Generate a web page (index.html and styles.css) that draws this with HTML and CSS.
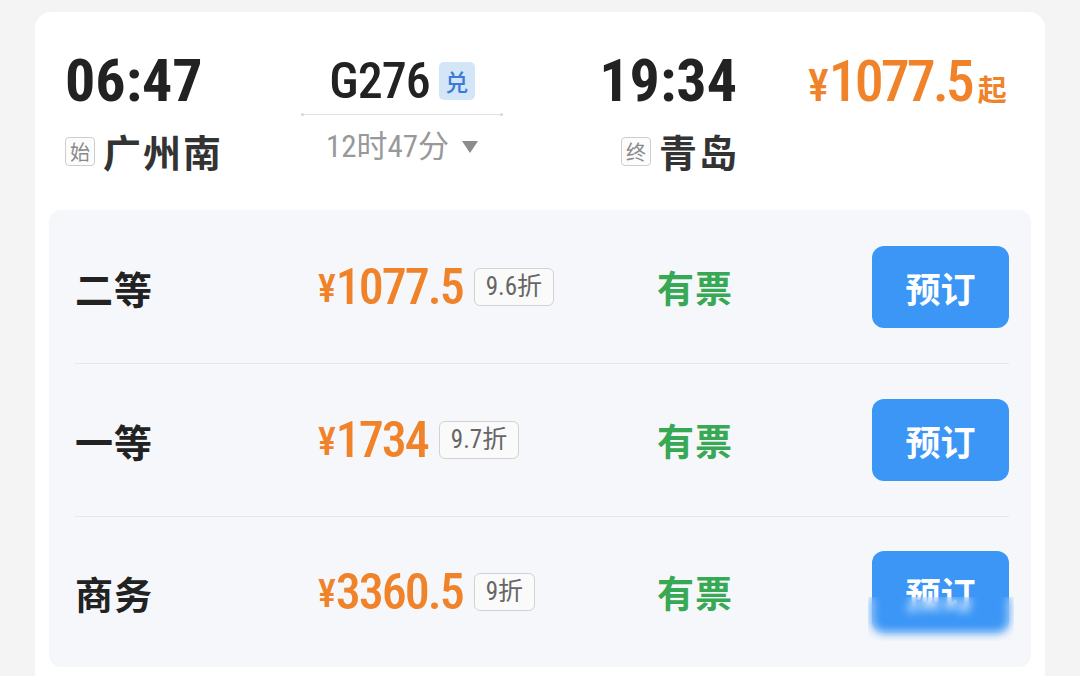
FILE: index.html
```html
<!DOCTYPE html>
<html lang="zh-CN">
<head>
<meta charset="utf-8">
<title>G276</title>
<link rel="stylesheet" href="styles.css">
</head>
<body>
<div class="card">
  <div class="head">
    <div class="dep">
      <div class="time">06:47</div>
      <div class="station"><span class="mark">始</span><span class="name">广州南</span></div>
    </div>
    <div class="train">
      <div class="train-no"><span class="no">G276</span><span class="dui">兑</span></div>
      <div class="track"></div>
      <div class="duration"><span>12时47分</span><svg class="tri" width="16" height="12" viewBox="0 0 16 12"><path d="M0 0H16L8 12Z" fill="#8c8c8c"/></svg></div>
    </div>
    <div class="arr">
      <div class="time">19:34</div>
      <div class="station"><span class="mark">终</span><span class="name">青岛</span></div>
    </div>
    <div class="from-price"><span class="yen">¥</span><span class="amt">1077.5</span><span class="qi">起</span></div>
  </div>
  <div class="seats">
    <div class="seat">
      <div class="seat-name">二等</div>
      <div class="seat-price"><span class="yen">¥</span><span class="amt">1077.5</span><span class="disc">9.6折</span></div>
      <div class="avail">有票</div>
      <button class="book">预订</button>
    </div>
    <div class="seat">
      <div class="seat-name">一等</div>
      <div class="seat-price"><span class="yen">¥</span><span class="amt">1734</span><span class="disc">9.7折</span></div>
      <div class="avail">有票</div>
      <button class="book">预订</button>
    </div>
    <div class="seat">
      <div class="seat-name">商务</div>
      <div class="seat-price"><span class="yen">¥</span><span class="amt">3360.5</span><span class="disc">9折</span></div>
      <div class="avail">有票</div>
      <button class="book">预订</button>
      <div class="smudge"></div>
    </div>
  </div>
</div>
</body>
</html>
```

FILE: styles.css
```css
* { box-sizing: border-box; }
html, body { margin: 0; }
body {
  width: 1080px;
  height: 676px;
  overflow: hidden;
  background: #f4f4f4;
  padding: 12px 0 0 35px;
  font-family: "Roboto Condensed", "Noto Sans CJK SC", sans-serif;
  color: #222;
}
.card {
  width: 1010px;
  background: #fff;
  border-radius: 16px;
  padding-bottom: 30px;
}
.head {
  display: flex;
  padding: 39px 0 39px 30px;
}
.dep { width: 235px; }
.train {
  width: 204px;
  padding-top: 5px;
  display: flex;
  flex-direction: column;
  align-items: center;
}
.arr {
  width: 233px;
  display: flex;
  flex-direction: column;
  align-items: flex-end;
}
.time {
  font-size: 60px;
  line-height: 60px;
  font-weight: 700;
  color: #222;
}
.station {
  margin-top: 20px;
  height: 40px;
  display: flex;
  align-items: center;
  gap: 8px;
}
.mark {
  width: 30px;
  height: 29px;
  border: 1px solid #cdcdcd;
  border-radius: 4px;
  background: #fcfcfc;
  font-family: "Noto Sans CJK SC", sans-serif;
  font-size: 20px;
  line-height: 27px;
  text-align: center;
  color: #8a8a8a;
}
.name {
  font-family: "Noto Sans CJK SC", sans-serif;
  font-size: 38px;
  line-height: 40px;
  font-weight: 700;
  color: #333;
  letter-spacing: 2px;
}
.arr .name { margin-right: -2px; }
.train-no {
  height: 50px;
  display: flex;
  align-items: center;
  gap: 9px;
}
.no {
  font-size: 50px;
  line-height: 50px;
  font-weight: 500;
  letter-spacing: -1px;
  color: #222;
}
.dui {
  width: 36px;
  height: 38px;
  border-radius: 5px;
  background: #d5e5f8;
  color: #3a7bd6;
  font-family: "Noto Sans CJK SC", sans-serif;
  font-size: 23px;
  font-weight: 500;
  line-height: 38px;
  text-align: center;
}
.track {
  position: relative;
  margin-top: 8px;
  width: 202px;
  height: 1px;
  background: #e0e0e0;
}
.track::before,
.track::after {
  content: "";
  position: absolute;
  top: -1px;
  width: 3px;
  height: 3px;
  border-radius: 50%;
  background: #d6d6d6;
}
.track::before { left: 0; }
.track::after { right: 0; }
.duration {
  margin-top: 17px;
  height: 30px;
  display: flex;
  align-items: center;
  gap: 13px;
  font-size: 31px;
  line-height: 30px;
  color: #999;
}
.from-price {
  margin-left: 71px;
  padding-top: 1px;
  display: flex;
  align-items: baseline;
  color: #f0822a;
  height: 60px;
  line-height: 58px;
  font-weight: 500;
}
.from-price .yen { font-size: 44px; }
.from-price .amt { font-size: 58px; letter-spacing: -3px; }
.from-price .qi {
  font-family: "Noto Sans CJK SC", sans-serif;
  font-size: 29px;
  font-weight: 700;
  margin-left: 6px;
}
.seats {
  margin: 0 14px;
  padding-top: 1px;
  background: #f6f7fa;
  border-radius: 12px;
}
.seat {
  position: relative;
  margin: 0 22px 0 26px;
  height: 153px;
  border-bottom: 1px solid #e6e7ea;
  display: grid;
  grid-template-columns: 243px 339px 1fr auto;
  align-items: center;
}
.seat:last-child { border-bottom: none; height: 150px; }
.seat-name {
  font-family: "Noto Sans CJK SC", sans-serif;
  font-size: 38px;
  font-weight: 700;
  color: #222;
  letter-spacing: 1px;
}
.seat-price {
  display: flex;
  align-items: center;
  color: #f0822a;
  font-weight: 500;
}
.seat-price .yen { font-size: 38px; line-height: 50px; padding-top: 4px; }
.seat-price .amt { font-size: 50px; line-height: 50px; letter-spacing: -2px; }
.disc {
  margin-left: 11px;
  height: 38px;
  padding: 0 11px;
  border: 1px solid #d2d2d2;
  border-radius: 6px;
  background: #fafafa;
  color: #666;
  font-size: 25px;
  font-weight: 400;
  line-height: 36px;
}
.avail {
  font-family: "Noto Sans CJK SC", sans-serif;
  font-size: 37px;
  font-weight: 700;
  color: #37a853;
  letter-spacing: 1px;
}
.book {
  width: 137px;
  height: 82px;
  border: none;
  border-radius: 12px;
  background: #3b96f6;
  color: #fff;
  font-family: "Noto Sans CJK SC", sans-serif;
  font-size: 35px;
  font-weight: 700;
  padding: 0;
}
.smudge {
  position: absolute;
  left: 793px;
  top: 80px;
  width: 146px;
  height: 44px;
  backdrop-filter: blur(5px);
  -webkit-backdrop-filter: blur(5px);
}
```
